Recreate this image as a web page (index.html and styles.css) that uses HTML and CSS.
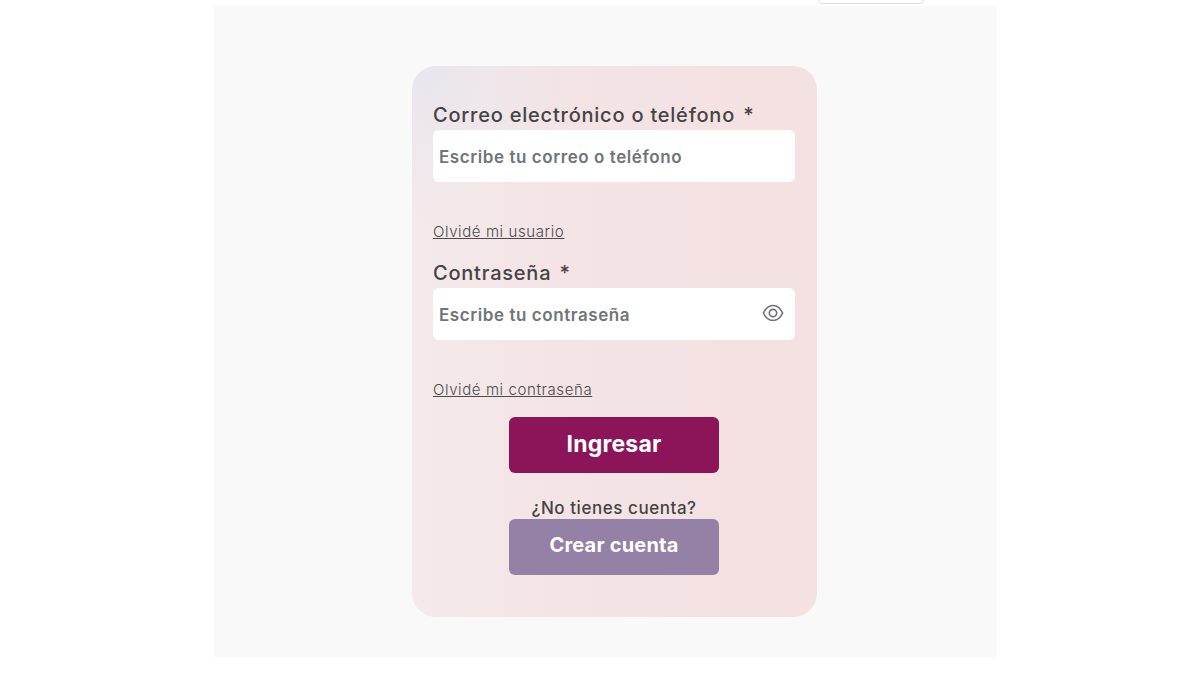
FILE: index.html
```html
<!DOCTYPE html>
<html lang="es">
  <head>
    <meta charset="UTF-8" />
    <meta name="viewport" content="width=device-width, initial-scale=1.0" />
    <title>Ingresar</title>
    <link rel="stylesheet" href="styles.css">
  </head>
  <body>
    <div class="top-tab"></div>
    <main class="panel">
      <form class="login-card">
        <label class="field-label">Correo electrónico o teléfono <span class="required">*</span></label>
        <div class="input-box">
          <span class="placeholder">Escribe tu correo o teléfono</span>
        </div>
        <a href="#" class="forgot">Olvidé mi usuario</a>

        <label class="field-label second">Contraseña <span class="required">*</span></label>
        <div class="input-box">
          <span class="placeholder">Escribe tu contraseña</span>
          <svg class="eye" width="22" height="22" viewBox="0 0 24 24" fill="none" stroke="#727275" stroke-width="1.8">
            <path d="M1.5 12C4 6.5 7.7 3.8 12 3.8S20 6.5 22.5 12C20 17.5 16.3 20.2 12 20.2S4 17.5 1.5 12Z" />
            <circle cx="12" cy="12" r="4" />
          </svg>
        </div>
        <a href="#" class="forgot">Olvidé mi contraseña</a>

        <button type="button" class="btn btn-primary">Ingresar</button>
        <p class="no-account">¿No tienes cuenta?</p>
        <button type="button" class="btn btn-secondary">Crear cuenta</button>
      </form>
    </main>
  </body>
</html>
```

FILE: styles.css
```css
body {
  margin: 0;
  padding: 6px 0 0;
  background-color: #fff;
  font-family: "Inter", "Open Sans", sans-serif;
  color: #454345;
}

.top-tab {
  position: absolute;
  top: -4px;
  left: 818px;
  width: 104px;
  height: 6px;
  background: #fff;
  border: 1px solid #dedede;
  border-radius: 4px;
}

.panel {
  position: relative;
  width: 783px;
  height: 651px;
  margin-left: 214px;
  padding: 60px 0 0 198px;
  box-sizing: border-box;
  background-color: #f9f9f9;
}

/* the panel runs a little lower at its right end */
.panel::after {
  content: "";
  position: absolute;
  right: 0;
  bottom: -4px;
  width: 47px;
  height: 4px;
  background-color: #fbfbfb;
}

.login-card {
  display: flex;
  flex-direction: column;
  width: 405px;
  height: 551px;
  padding: 37px 22px 0 21px;
  box-sizing: border-box;
  border-radius: 24px;
  background:
    radial-gradient(circle at 0 0, #e9e6ee 0%, rgba(233, 230, 238, 0) 170px),
    linear-gradient(90deg, #f4eaeb 0%, #f4e4e5 35%, #f4e1e2 100%);
}

.field-label {
  font-size: 20px;
  line-height: 24px;
  font-weight: 500;
  letter-spacing: 0.78px;
  margin-bottom: 3px;
}

.field-label.second {
  margin-top: 20px;
}

.required {
  margin-left: 2px;
}

.input-box {
  display: flex;
  justify-content: space-between;
  align-items: center;
  height: 52px;
  padding: 0 11px 0 6px;
  background-color: #fff;
  border-radius: 6px;
}

.placeholder {
  padding-top: 1px;
  font-size: 17px;
  font-weight: 600;
  letter-spacing: 0.57px;
  color: #6f7578;
}

.eye {
  margin-bottom: 2px;
}

.forgot {
  margin-top: 41px;
  align-self: flex-start;
  font-size: 15px;
  line-height: 18px;
  font-weight: 300;
  letter-spacing: 0.6px;
  color: #4d4a4d;
}

.btn {
  display: block;
  align-self: center;
  width: 210px;
  height: 56px;
  padding: 0 0 2px;
  border: none;
  border-radius: 6px;
  font-family: inherit;
  font-size: 23px;
  font-weight: 700;
  letter-spacing: 0.2px;
  color: #fff;
  cursor: pointer;
}

.btn-primary {
  margin-top: 18px;
  background-color: #8c1559;
}

.btn-secondary {
  padding-bottom: 4px;
  font-size: 20px;
  background-color: #9580a6;
}

.no-account {
  margin: 25px 0 1px;
  text-align: center;
  font-size: 17px;
  line-height: 20px;
  font-weight: 500;
  letter-spacing: 0.55px;
}
```
